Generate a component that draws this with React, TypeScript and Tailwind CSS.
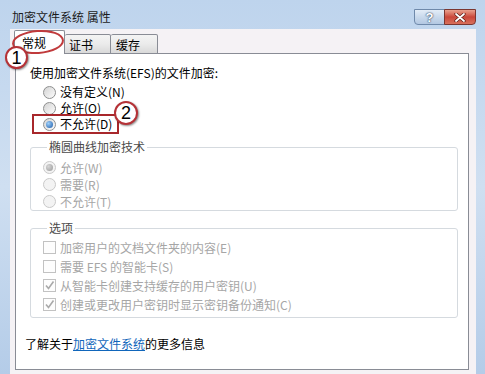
import clsx from "clsx";

const font = { fontFamily: '"Noto Sans CJK SC", "Liberation Sans", sans-serif' };

function Radio({ checked, disabled }: { checked?: boolean; disabled?: boolean }) {
  return (
    <span
      className={clsx(
        "flex h-[13px] w-[13px] shrink-0 items-center justify-center rounded-full border",
        disabled
          ? "border-[#c9c9c9] bg-[#f3f3f3]"
          : "border-[#8e8f8f] bg-gradient-to-br from-[#d4d4d4] to-[#fcfcfc]"
      )}
    >
      {checked && (
        <span
          className={clsx(
            "h-[7px] w-[7px] rounded-full",
            disabled
              ? "bg-[radial-gradient(circle_at_35%_35%,#d6d6d6,#9a9a9a)]"
              : "bg-[radial-gradient(circle_at_35%_35%,#9fd0fa,#1b5aa8)]"
          )}
        />
      )}
    </span>
  );
}

function Check({ checked }: { checked?: boolean }) {
  return (
    <span className="flex h-[13px] w-[13px] shrink-0 items-center justify-center border border-[#c2c2c2] bg-[#fdfdfd]">
      {checked && (
        <svg width="11" height="11" viewBox="0 0 11 11">
          <path d="M2 5.5 L4.5 8.5 L9.5 1.5" fill="none" stroke="#a9a9a9" strokeWidth="1.6" />
        </svg>
      )}
    </span>
  );
}

function Row({ h, children, control }: { h: string; children: React.ReactNode; control: React.ReactNode }) {
  return (
    <div className={clsx("flex items-center gap-[4px]", h)}>
      {control}
      <span className="leading-[16px]">{children}</span>
    </div>
  );
}

export default function App() {
  return (
    <div
      className="relative flex h-[374px] w-[485px] flex-col overflow-hidden bg-gradient-to-b from-[#bed4ed] via-[#cfdff1] to-[#b4cce8] text-[12px] text-black"
      style={font}
    >
      {/* title bar */}
      <div className="flex h-[29px] shrink-0 items-start justify-between pl-[12px] pr-[9px]">
        <span className="mt-[9px] text-[12px] leading-[16px] text-[#1b1b1b]">加密文件系统 属性</span>
        <div className="mt-[9px] flex">
          <div
            className="flex h-[16px] w-[31px] items-center justify-center rounded-bl-[4px] border border-[#6f89aa] bg-gradient-to-b from-[#e4edf7] via-[#c9d9ec] to-[#b3c8e2] text-[13px] font-bold leading-none text-white [text-shadow:0_0_1px_#2c4360,0_0_2px_#2c4360]"
            style={{ fontFamily: '"Liberation Sans", sans-serif' }}
          >
            ?
          </div>
          <div className="-ml-px flex h-[16px] w-[32px] items-center justify-center rounded-br-[4px] border border-[#7b3630] bg-gradient-to-b from-[#e8a08e] via-[#c9463a] to-[#d8705c]">
            <svg width="12" height="9" viewBox="0 0 12 9">
              <path d="M2 1 L10 8 M10 1 L2 8" stroke="#5a1c16" strokeWidth="3.2" strokeLinecap="round" />
              <path d="M2 1 L10 8 M10 1 L2 8" stroke="#fff" strokeWidth="1.8" strokeLinecap="round" />
            </svg>
          </div>
        </div>
      </div>

      {/* client area */}
      <div className="ml-[10px] mr-[9px] flex-1 bg-[#f5f2f5] pl-[5px] pr-[7px]">
        <div className="relative z-10 -mb-px flex items-end pt-[1px]">
          <div className="-ml-px h-[24px] w-[51px] rounded-t-[2px] border border-b-0 border-[#898c95] bg-white pl-[7px] pt-[4px] leading-[16px]">
            常规
          </div>
          <div className="h-[20px] w-[46px] rounded-t-[2px] border border-l-0 border-[#898c95] bg-gradient-to-b from-[#f4f4f4] via-[#ebebeb] to-[#d9d9d9] pl-[4px] pt-[2px] leading-[16px]">
            证书
          </div>
          <div className="h-[20px] w-[47px] rounded-t-[2px] border border-l-0 border-[#898c95] bg-gradient-to-b from-[#f4f4f4] via-[#ebebeb] to-[#d9d9d9] pl-[5px] pt-[2px] leading-[16px]">
            缓存
          </div>
        </div>

        <div className="h-[317px] border border-[#898c95] bg-white">
          <div className="mt-[11px] pl-[14px] leading-[16px]">使用加密文件系统(EFS)的文件加密:</div>
          <div className="mt-[3px] pl-[27px]">
            <Row h="h-[16px]" control={<Radio />}>没有定义(N)</Row>
            <Row h="h-[16px]" control={<Radio />}>允许(O)</Row>
            <Row h="h-[16px]" control={<Radio checked />}>不允许(D)</Row>
          </div>

          <fieldset className="mr-[10px] ml-[14px] mt-[7px] rounded-[3px] border border-[#d5dadf] pb-0 pl-[12px] pt-[4px] text-[#a6a6a6]">
            <legend className="ml-[4px] px-[2px] leading-[16px] text-[#4a4a4a]">椭圆曲线加密技术</legend>
            <Row h="h-[17px]" control={<Radio checked disabled />}>允许(W)</Row>
            <Row h="h-[17px]" control={<Radio disabled />}>需要(R)</Row>
            <Row h="h-[17px]" control={<Radio disabled />}>不允许(T)</Row>
          </fieldset>

          <fieldset className="mr-[10px] ml-[14px] mt-[9px] rounded-[3px] border border-[#d5dadf] pb-[3px] pl-[12px] pt-[2px] text-[#a6a6a6]">
            <legend className="ml-[4px] px-[2px] leading-[16px] text-[#4a4a4a]">选项</legend>
            <Row h="h-[19px]" control={<Check />}>加密用户的文档文件夹的内容(E)</Row>
            <Row h="h-[19px]" control={<Check />}>需要 EFS 的智能卡(S)</Row>
            <Row h="h-[19px]" control={<Check checked />}>从智能卡创建支持缓存的用户密钥(U)</Row>
            <Row h="h-[19px]" control={<Check checked />}>创建或更改用户密钥时显示密钥备份通知(C)</Row>
          </fieldset>

          <div className="mt-[18px] pl-[9px] leading-[16px]">
            了解关于<span className="text-[#1166bb] underline">加密文件系统</span>的更多信息
          </div>
        </div>
      </div>

      {/* annotations */}
      <div className="absolute left-[12px] top-[30px] z-20 h-[24px] w-[52px] -rotate-[4deg] rounded-[50%] border-2 border-[#c03a3c]" />
      <div
        className="absolute left-[5px] top-[46px] z-20 flex h-[23px] w-[23px] items-center justify-center rounded-full border-2 border-[#b53237] bg-white text-[18px] leading-none text-black shadow-[1px_1px_2px_rgba(0,0,0,0.45)]"
        style={{ fontFamily: '"Liberation Sans", sans-serif' }}
      >
        1
      </div>
      <div className="absolute left-[32px] top-[114px] z-20 h-[20px] w-[87px] border-2 border-[#a8272b]" />
      <div
        className="absolute left-[114px] top-[101px] z-20 flex h-[24px] w-[24px] items-center justify-center rounded-full border-2 border-[#b53237] bg-white text-[18px] leading-none text-black shadow-[1px_1px_2px_rgba(0,0,0,0.45)]"
        style={{ fontFamily: '"Liberation Sans", sans-serif' }}
      >
        2
      </div>
    </div>
  );
}
